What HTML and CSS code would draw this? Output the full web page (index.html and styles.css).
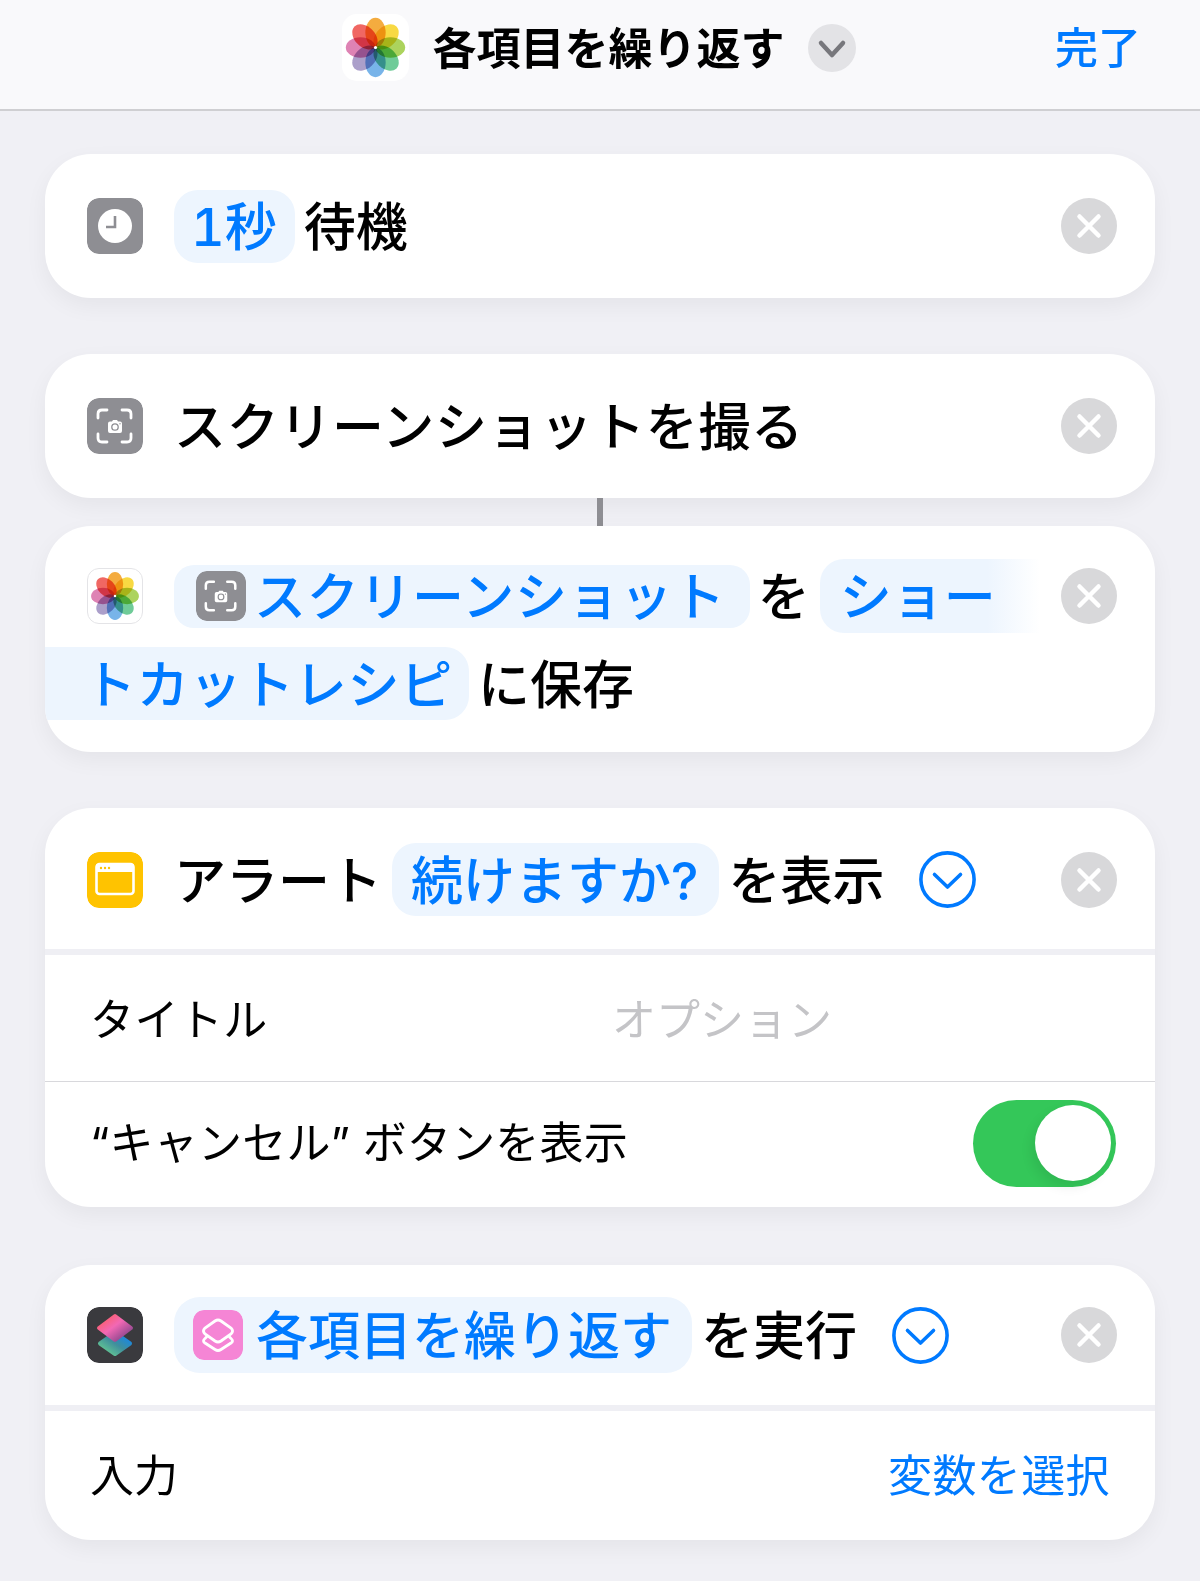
FILE: index.html
```html
<!DOCTYPE html>
<html lang="ja">
<head>
    <meta charset="utf-8">
    <title>各項目を繰り返す</title>
    <link rel="stylesheet" href="styles.css">
</head>
<body>
    <!-- shared icons -->
    <svg class="defs">
        <symbol id="flower" viewBox="0 0 56 56">
            <g class="flower">
                <ellipse cx="28" cy="15.5" rx="8.5" ry="12.3" fill="#f4a52e"/>
                <ellipse cx="28" cy="15.5" rx="8.5" ry="12.3" fill="#f8d633" transform="rotate(45 28 28)"/>
                <ellipse cx="28" cy="15.5" rx="8.5" ry="12.3" fill="#a5d04f" transform="rotate(90 28 28)"/>
                <ellipse cx="28" cy="15.5" rx="8.5" ry="12.3" fill="#63c78f" transform="rotate(135 28 28)"/>
                <ellipse cx="28" cy="15.5" rx="8.5" ry="12.3" fill="#6caee8" transform="rotate(180 28 28)"/>
                <ellipse cx="28" cy="15.5" rx="8.5" ry="12.3" fill="#a497c6" transform="rotate(225 28 28)"/>
                <ellipse cx="28" cy="15.5" rx="8.5" ry="12.3" fill="#dc78ae" transform="rotate(270 28 28)"/>
                <ellipse cx="28" cy="15.5" rx="8.5" ry="12.3" fill="#ef5a55" transform="rotate(315 28 28)"/>
            </g>
            <circle cx="28" cy="28" r="1.3" fill="#fff"/>
        </symbol>
        <symbol id="close" viewBox="0 0 56 56">
            <circle cx="28" cy="28" r="28" fill="#d8d8da"/>
            <path d="M18.5 18.5 L37.5 37.5 M37.5 18.5 L18.5 37.5" stroke="#fff" stroke-width="4.5" stroke-linecap="round"/>
        </symbol>
        <symbol id="chevron" viewBox="0 0 57 57">
            <circle cx="28.5" cy="28.5" r="26.6" fill="none" stroke="#007aff" stroke-width="3.6"/>
            <path d="M15.5 23.5 L28.5 36 L41.5 23.5" fill="none" stroke="#007aff" stroke-width="3.6" stroke-linecap="round" stroke-linejoin="round"/>
        </symbol>
        <symbol id="camera" viewBox="0 0 56 56">
            <rect width="56" height="56" rx="12" fill="#8e8e93"/>
            <path d="M11 20 V16 Q11 12 15 12 H20 M35 12 H40 Q44 12 44 16 V20 M44 36 V40 Q44 44 40 44 H35 M20 44 H15 Q11 44 11 40 V36" fill="none" stroke="#fff" stroke-width="2.8" stroke-linecap="round"/>
            <path d="M23 23.5 H25 L26 22 H30 L31 23.5 H33 Q35 23.5 35 25.5 V33 Q35 35 33 35 H23 Q21 35 21 33 V25.5 Q21 23.5 23 23.5 Z" fill="#fff"/>
            <circle cx="28" cy="29" r="3.2" fill="none" stroke="#8e8e93" stroke-width="1.3"/>
            <circle cx="33" cy="25.8" r=".7" fill="#8e8e93"/>
        </symbol>
    </svg>

    <header class="topbar">
        <div></div>
        <div class="topbar_title">
            <span class="app_icon"><svg class="fill"><use href="#flower"/></svg></span>
            <h1>各項目を繰り返す</h1>
            <span class="title_chevron">
                <svg viewBox="0 0 48 48"><path d="M13 19 L24 31 L35 19" fill="none" stroke="#77777c" stroke-width="4.5" stroke-linecap="round" stroke-linejoin="round"/></svg>
            </span>
        </div>
        <div class="done">完了</div>
    </header>

    <main class="page">
        <section class="card">
            <div class="action">
                <svg class="icon" viewBox="0 0 56 56">
                    <rect width="56" height="56" rx="12" fill="#8e8e93"/>
                    <circle cx="28" cy="28" r="17" fill="#fff"/>
                    <path d="M28 18 V29 H19" fill="none" stroke="#8e8e93" stroke-width="2.6"/>
                </svg>
                <span class="pill pill_first">1秒</span>
                <span class="word word_tight">待機</span>
                <svg class="close"><use href="#close"/></svg>
            </div>
        </section>

        <section class="card card_linked">
            <div class="action">
                <svg class="icon"><use href="#camera"/></svg>
                <span class="word word_start kana">スクリーンショットを撮る</span>
                <svg class="close"><use href="#close"/></svg>
            </div>
        </section>
        <div class="connector"></div>

        <section class="card card_wrap">
            <div class="wrap_line">
                <svg class="icon icon_framed"><use href="#flower"/></svg>
                <span class="pill pill_var kana">
                    <svg class="pill_icon"><use href="#camera"/></svg>
                    スクリーンショット
                </span>
                <span class="word">を</span>
                <span class="pill pill_fade">ショー</span>
                <svg class="close"><use href="#close"/></svg>
            </div>
            <div class="wrap_line wrap_second">
                <span class="pill pill_cont kana">トカットレシピ</span>
                <span class="word">に保存</span>
            </div>
        </section>

        <section class="card card_alert">
            <div class="action action_alert">
                <svg class="icon" viewBox="0 0 56 56">
                    <rect width="56" height="56" rx="12" fill="#ffc300"/>
                    <rect x="9.5" y="12" width="37" height="30" rx="3" fill="none" stroke="#fff" stroke-width="2.6"/>
                    <rect x="9.5" y="12" width="37" height="8" fill="#fff"/>
                    <circle cx="14" cy="16" r="1.2" fill="#ffc300"/>
                    <circle cx="18" cy="16" r="1.2" fill="#ffc300"/>
                    <circle cx="22" cy="16" r="1.2" fill="#ffc300"/>
                </svg>
                <span class="word word_start">アラート</span>
                <span class="pill pill_alert">続けますか?</span>
                <span class="word word_after">を表示</span>
                <svg class="more"><use href="#chevron"/></svg>
                <svg class="close"><use href="#close"/></svg>
            </div>
            <div class="band"></div>
            <div class="row row_line">
                <span class="row_label">タイトル</span>
                <span class="row_hint">オプション</span>
            </div>
            <div class="row row_toggle">
                <span class="row_spaced">“キャンセル” ボタンを表示</span>
                <span class="toggle"><span class="knob"></span></span>
            </div>
        </section>

        <section class="card">
            <div class="action action_run">
                <svg class="icon" viewBox="0 0 56 56">
                    <defs>
                        <linearGradient id="topLayer" x1="0" y1="0" x2="1" y2="1">
                            <stop offset="0" stop-color="#ff5a55"/>
                            <stop offset=".45" stop-color="#f268b4"/>
                            <stop offset="1" stop-color="#6b3b80"/>
                        </linearGradient>
                        <linearGradient id="lowLayer" x1="0" y1="1" x2="1" y2="0">
                            <stop offset="0" stop-color="#6fd890"/>
                            <stop offset=".5" stop-color="#3f8f9c"/>
                            <stop offset="1" stop-color="#0a84ff"/>
                        </linearGradient>
                    </defs>
                    <rect width="56" height="56" rx="12" fill="#3a3a3e"/>
                    <path d="M28 26 L43 36.5 L28 47 L13 36.5 Z" fill="url(#lowLayer)" stroke="url(#lowLayer)" stroke-width="4" stroke-linejoin="round"/>
                    <path d="M28 9 L44 21 L28 33 L12 21 Z" fill="url(#topLayer)" stroke="url(#topLayer)" stroke-width="4" stroke-linejoin="round"/>
                </svg>
                <span class="pill pill_run">
                    <svg class="pill_icon pill_icon_wide" viewBox="0 0 50 50">
                        <rect width="50" height="50" rx="11" fill="#f585d5"/>
                        <path d="M22 11 Q25 9 28 11 L38 18 Q41 21 38 24 L28 31 Q25 33 22 31 L12 24 Q9 21 12 18 Z" fill="none" stroke="#fff" stroke-width="2.8"/>
                        <path d="M13.5 27 L12 28.5 Q9 31 12 33 L22 39.5 Q25 41.5 28 39.5 L38 33 Q41 31 38 28.5 L36.5 27" fill="none" stroke="#fff" stroke-width="2.8" stroke-linecap="round"/>
                    </svg>
                    各項目を繰り返す
                </span>
                <span class="word word_after">を実行</span>
                <svg class="more"><use href="#chevron"/></svg>
                <svg class="close"><use href="#close"/></svg>
            </div>
            <div class="band"></div>
            <div class="row row_input">
                <span>入力</span>
                <span class="row_link">変数を選択</span>
            </div>
        </section>
    </main>
</body>
</html>
```

FILE: styles.css
```css
html{background-color: #f0f0f5;}
body{
    margin: 0;
    height: 1581px;
    overflow: hidden;
    background-color: #f0f0f5;
    color: #000;
    font-family: Inter, "Noto Sans CJK JP", sans-serif;
    white-space: nowrap;
}
svg{display: block; flex-shrink: 0;}
.defs{display: none;}
.fill{width: 100%; height: 100%;}
.flower ellipse{mix-blend-mode: multiply; opacity: .92;}

/* top bar */
.topbar{
    display: grid;
    grid-template-columns: 1fr auto 1fr;
    align-items: center;
    height: 109px;
    padding: 0 59px 0 56px;
    background-color: #f9f9fb;
    border-bottom: 2px solid #cfcfd2;
}
.topbar_title{
    display: flex;
    align-items: center;
}
.app_icon{
    width: 67px;
    height: 67px;
    border-radius: 15px;
    background-color: #fff;
    margin-top: -14px;
}
h1{
    margin: -12px 23px 0 24px;
    font-size: 44px;
    line-height: 1;
    font-weight: 700;
}
.title_chevron{
    width: 48px;
    height: 48px;
    margin-top: -14px;
    border-radius: 50%;
    background-color: #e3e3e6;
}
.done{
    justify-self: end;
    margin-top: -12px;
    font-size: 43px;
    line-height: 1;
    font-weight: 500;
    color: #007aff;
}

/* cards */
.page{
    display: flex;
    flex-direction: column;
    padding: 43px 45px 0;
}
.card{
    background-color: #fff;
    border-radius: 46px;
    box-shadow: 0 8px 22px rgba(0, 0, 0, .05);
    margin-bottom: 56px;
    overflow: hidden;
}
.card_linked{margin-bottom: 0;}
.card_alert{margin-bottom: 58px;}
.card_wrap{
    padding: 33px 0 32px;
    height: 226px;
    box-sizing: border-box;
}
.connector{
    width: 6px;
    height: 28px;
    margin: 0 auto;
    background-color: #8e8e93;
}
.action{
    display: flex;
    align-items: center;
    height: 144px;
    padding: 0 38px 0 42px;
}
.action_alert{
    height: 139px;
    padding-top: 2px;
}
.action_run{height: 140px;}
.icon{
    width: 56px;
    height: 56px;
    border-radius: 12px;
}
.icon_framed{
    box-sizing: border-box;
    border: 1px solid #e4e4e7;
}
.close{
    width: 56px;
    height: 56px;
    margin-left: auto;
}
.more{
    width: 57px;
    height: 57px;
    margin-left: 35px;
}

/* words and variable pills */
.word{
    padding-top: 4px;
    font-size: 52px;
    line-height: 1;
    font-weight: 500;
}
.kana{letter-spacing: .7px;}
.word_tight{margin-left: 9px;}
.word_start{margin-left: 31px;}
.word_after{margin-left: 9px;}
.pill{
    display: flex;
    align-items: center;
    padding-top: 4px;
    font-size: 52px;
    line-height: 1;
    font-weight: 500;
    color: #007aff;
    background-color: #edf5fe;
    border-radius: 24px;
    height: 73px;
    box-sizing: border-box;
    font-variant-numeric: tabular-nums;
}
.pill_first{margin-left: 31px; padding-left: 17px; padding-right: 18px;}
.pill_var{
    margin-left: 31px;
    margin-right: 8px;
    height: 63px;
    padding-left: 22px;
    padding-right: 24px;
    border-radius: 20px;
}
.pill_icon{
    width: 50px;
    height: 50px;
    margin-top: -4px;
    margin-right: 8px;
    border-radius: 11px;
}
.pill_icon_wide{margin-right: 13px;}
.pill_fade{
    width: 220px;
    height: 74px;
    margin-left: 10px;
    padding-left: 20px;
    border-radius: 24px 0 0 24px;
    background: linear-gradient(to right, #edf5fe 76%, rgba(237, 245, 254, 0));
}
.pill_cont{
    width: 424px;
    padding-left: 39px;
    border-radius: 0 24px 24px 0;
}
.pill_alert{margin-left: 10px; padding-left: 19px; padding-right: 21px;}
.pill_run{
    margin-left: 31px;
    height: 76px;
    padding-left: 19px;
    padding-right: 20px;
    border-radius: 26px;
}
.wrap_line{
    display: flex;
    align-items: center;
    height: 74px;
    padding: 0 38px 0 42px;
}
.wrap_second{
    height: 73px;
    margin-top: 14px;
    padding: 0;
    column-gap: 9px;
}

/* settings rows */
.band{
    height: 6px;
    background-color: #efeff4;
}
.row{
    display: flex;
    align-items: center;
    padding: 0 39px 0 45px;
    font-size: 44px;
    line-height: 1;
}
.row_line{
    height: 123px;
    padding-top: 3px;
    border-bottom: 1px solid #d8d8dc;
}
.row_label{width: 522px; letter-spacing: .4px;}
.row_hint{color: #c4c4c7;}
.row_toggle{
    height: 122px;
    padding-bottom: 3px;
    justify-content: space-between;
}
.row_spaced{letter-spacing: .2px;}
.row_input{
    height: 129px;
    justify-content: space-between;
    padding-right: 45px;
}
.row_link{color: #007aff; letter-spacing: .4px;}
.toggle{
    display: flex;
    align-items: center;
    justify-content: flex-end;
    width: 143px;
    height: 87px;
    padding-right: 5px;
    box-sizing: border-box;
    border-radius: 44px;
    background-color: #34c759;
}
.knob{
    width: 76px;
    height: 76px;
    border-radius: 50%;
    background-color: #fff;
    box-shadow: -4px 6px 12px rgba(0, 0, 0, .08);
}
```
